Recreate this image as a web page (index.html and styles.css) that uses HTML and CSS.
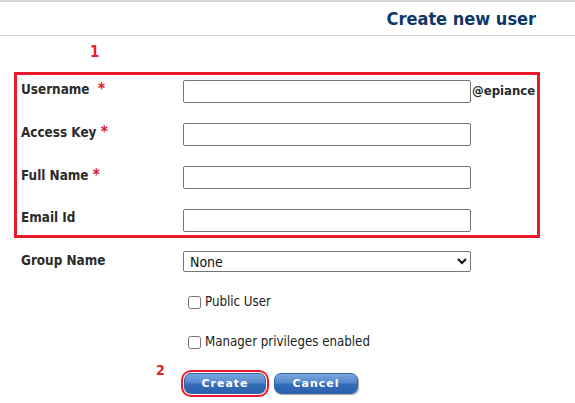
FILE: index.html
```html
<!DOCTYPE html>
<html>
<head>
<meta charset="utf-8">
<link rel="stylesheet" href="styles.css">
</head>
<body>
<div class="header"><h1 class="title">Create new user</h1></div>
<div class="marker marker-one">1</div>
<div class="box">
  <div class="row">
    <label class="label">Username&nbsp; <span class="req">*</span></label>
    <input class="field" type="text">
    <span class="domain">@epiance</span>
  </div>
  <div class="row">
    <label class="label">Access Key <span class="req">*</span></label>
    <input class="field" type="text">
  </div>
  <div class="row">
    <label class="label">Full Name <span class="req">*</span></label>
    <input class="field" type="text">
  </div>
  <div class="row">
    <label class="label">Email Id</label>
    <input class="field" type="text">
  </div>
</div>
<div class="group-row">
  <label class="label">Group Name</label>
  <select class="select"><option>None</option></select>
</div>
<div class="check-row"><input class="check" type="checkbox"><span class="check-text">Public User</span></div>
<div class="check-row"><input class="check" type="checkbox"><span class="check-text">Manager privileges enabled</span></div>
<div class="marker marker-two">2</div>
<div class="buttons">
  <button class="btn btn-create">Create</button>
  <button class="btn btn-cancel">Cancel</button>
</div>
</body>
</html>
```
FILE: styles.css
```css
html, body {
  margin: 0;
  padding: 0;
  background: #fff;
}
body {
  font-family: "DejaVu Sans Condensed", "DejaVu Sans", sans-serif;
  color: #2a2a2a;
  width: 575px;
  height: 403px;
  overflow: hidden;
}
.header {
  border-top: 2px solid #d6d6d6;
  border-bottom: 1px solid #d3d3d3;
  height: 33px;
  display: flex;
  align-items: center;
  justify-content: flex-end;
  padding-right: 39px;
}
.title {
  margin: 0;
  font-size: 18px;
  font-weight: bold;
  color: #0f3867;
  line-height: 20px;
}
.marker {
  color: #e8202a;
  font-weight: bold;
  font-size: 15px;
}
.marker-one {
  height: 36px;
  box-sizing: border-box;
  padding-top: 8px;
  padding-left: 90px;
  line-height: 16px;
}
.box {
  margin-left: 14px;
  width: 526px;
  height: 166px;
  box-sizing: border-box;
  border: 3px solid #e8192a;
  padding: 5px 0 0 4px;
}
.row {
  display: flex;
  align-items: flex-start;
  height: 43px;
}
.label {
  width: 162px;
  flex: none;
  font-size: 13.4px;
  font-weight: bold;
  line-height: 16px;
  padding-top: 1px;
  color: #2b2b2b;
}
.req {
  color: #e0151f;
  font-size: 15px;
}
.field {
  width: 288px;
  height: 23px;
  box-sizing: border-box;
  border: 1px solid #767676;
  border-radius: 2px;
  margin: 0;
  padding: 1px 3px;
  font-size: 13px;
  flex: none;
}
.domain {
  font-size: 13px;
  font-weight: bold;
  line-height: 16px;
  padding-top: 3px;
  padding-left: 1px;
}
.group-row {
  display: flex;
  align-items: flex-start;
  margin-top: 13px;
  padding-left: 21px;
  height: 20px;
}
.group-row .label {
  padding-top: 2px;
}
.select {
  width: 288px;
  height: 21px;
  box-sizing: border-box;
  margin: 0;
  font-family: "DejaVu Sans Condensed", "DejaVu Sans", sans-serif;
  font-size: 14px;
  color: #111;
  border: 1px solid #767676;
  border-radius: 2px;
  background: #fff;
  padding: 0 2px;
}
.check-row {
  display: flex;
  align-items: center;
  height: 40px;
  padding-left: 183px;
}
.group-row + .check-row {
  margin-top: 11px;
}
.check {
  width: 13px;
  height: 13px;
  margin: 0 4px 0 5px;
}
.check-text {
  font-size: 13.2px;
  color: #222;
  line-height: 16px;
}
.marker-two {
  height: 11px;
  line-height: 16px;
  padding-left: 156px;
  font-size: 14px;
}
.buttons {
  display: flex;
  gap: 8px;
  padding-left: 184px;
}
.btn {
  height: 21px;
  box-sizing: border-box;
  border: 1px solid #3466a8;
  border-radius: 7px;
  background: linear-gradient(#78a8de 0%, #5588cc 45%, #346cb8 55%, #2c62ad 100%);
  color: #fff;
  font-family: "DejaVu Sans", sans-serif;
  font-size: 11px;
  font-weight: bold;
  letter-spacing: 1px;
  padding: 0;
  box-shadow: 1px 1px 1px rgba(0, 0, 0, 0.35);
}
.btn-create {
  width: 82px;
  box-shadow: 0 0 0 1px #fff, 0 0 0 3px #e8192a;
}
.btn-cancel {
  width: 84px;
}
```
